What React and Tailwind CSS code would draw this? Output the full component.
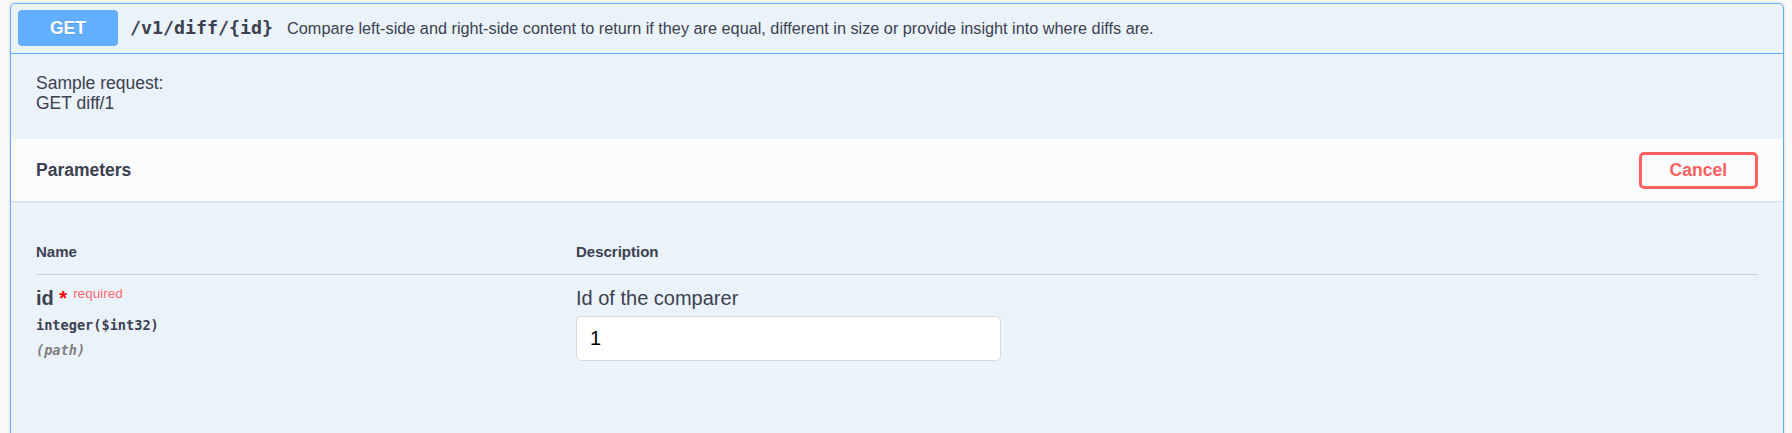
export default function App() {
  return (
    <div className="min-h-screen bg-[#fafafa] pt-[3px] pl-[10px] pr-[8px] font-['Liberation_Sans',Arial,sans-serif] text-[#3b4151]">
      <div className="rounded-[5px] border border-[#61affe] bg-[rgba(97,175,254,0.1)] shadow-[0_0_3px_rgba(0,0,0,0.19)]">
        {/* Summary */}
        <div className="flex items-center border-b border-[#61affe] pl-[7px] pr-[7px] pt-[6px] pb-[7px]">
          <span className="flex h-[36px] w-[100px] shrink-0 items-center justify-center rounded-[4px] bg-[#61affe] text-[17.5px] font-bold text-white [text-shadow:0_1px_0_rgba(0,0,0,0.1)]">
            GET
          </span>
          <span className="pl-[12px] pr-[14px] font-['DejaVu_Sans_Mono',monospace] text-[18.3px] font-bold text-[#3b4151]">
            {"/v1/diff/{id}"}
          </span>
          <span className="text-[16.25px] text-[#3b4151]">
            Compare left-side and right-side content to return if they are equal, different in size or provide insight into where diffs are.
          </span>
        </div>

        {/* Description */}
        <div className="px-[25px] pt-[19px] pb-[26px] text-[17.5px] leading-[20px]">
          <p>
            Sample request:
            <br />
            GET diff/1
          </p>
        </div>

        {/* Parameters header */}
        <div className="flex h-[62px] items-center justify-between bg-white/80 px-[25px] shadow-[0_1px_2px_rgba(0,0,0,0.1)]">
          <h4 className="text-[17.5px] font-bold">Parameters</h4>
          <button className="h-[37px] rounded-[5px] border-[3px] border-[#ff6060] px-[28px] text-[17.5px] font-bold text-[#ff6060]">
            Cancel
          </button>
        </div>

        {/* Table */}
        <div className="px-[25px] pt-[25px] pb-[90px]">
          <div className="grid grid-cols-[540px_1fr] border-b border-[rgba(59,65,81,0.2)] pt-[17px] pb-[14px] text-[15px] font-bold leading-[17px]">
            <div>Name</div>
            <div>Description</div>
          </div>
          <div className="grid grid-cols-[540px_1fr] pt-[12px]">
            <div>
              <div className="text-[20px] font-bold leading-[23px]">
                id<span className="text-[#ff0000]">&nbsp;*</span>
                <span className="relative top-[-7.5px] pl-[6px] text-[13.5px] font-normal text-[rgba(255,0,0,0.6)]">
                  required
                </span>
              </div>
              <div className="mt-[1px] h-[24px] font-['DejaVu_Sans_Mono',monospace] text-[13.6px] font-bold leading-[24px] text-[#3b4151]">
                integer($int32)
              </div>
              <div className="mt-[1px] h-[24px] font-['DejaVu_Sans_Mono',monospace] text-[13.6px] font-bold italic leading-[24px] text-[#808080]">
                (path)
              </div>
            </div>
            <div>
              <p className="text-[20px] leading-[23px]">Id of the comparer</p>
              <input
                defaultValue="1"
                className="mt-[6px] h-[45px] w-[425px] rounded-[5px] border border-[#d9d9d9] bg-white px-[13px] text-[20px] text-black outline-none"
              />
            </div>
          </div>
        </div>
      </div>
    </div>
  );
}
